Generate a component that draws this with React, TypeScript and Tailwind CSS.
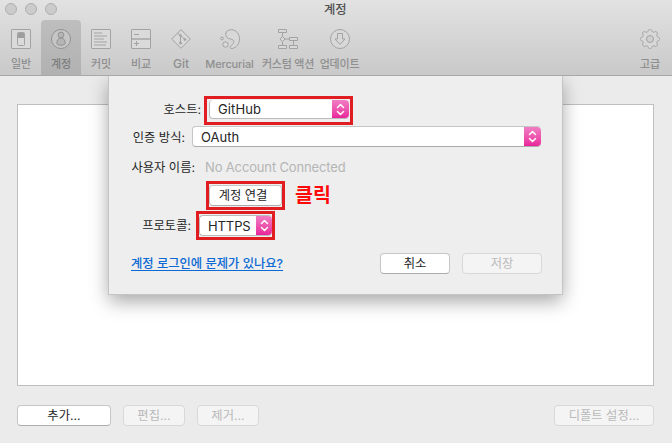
import React from "react";

type ToolProps = { label: string; width: string; active?: boolean; text?: string; children: React.ReactNode };

function Tool({ label, width, active, text = "tracking-normal", children }: ToolProps) {
  return (
    <div
      className={`flex h-[55px] shrink-0 flex-col items-center rounded-t-[4px] pt-[9px] ${width} ${
        active ? "bg-linear-to-b from-[#bebebe] to-[#b1b1b1] text-[#7d7d7d]" : "text-[#8f8f8f]"
      }`}
    >
      <svg
        width="20"
        height="20"
        viewBox="0 0 20 20"
        fill="none"
        stroke={active ? "#929292" : "#a3a3a3"}
        className="shrink-0"
      >
        {children}
      </svg>
      <span className={`mt-[7px] text-[11px] leading-[16px] font-medium whitespace-nowrap ${text}`}>{label}</span>
    </div>
  );
}

function Stepper({ width }: { width: string }) {
  return (
    <span
      className={`flex shrink-0 items-center justify-center self-stretch rounded-r-[4px] bg-linear-to-b from-[#f07cc4] to-[#e9209b] ${width}`}
    >
      <svg width="9" height="13" viewBox="0 0 9 13" fill="none" stroke="#fff" strokeWidth="1.5" strokeLinecap="round" strokeLinejoin="round">
        <path d="M1.5 4.5l3-3 3 3M1.5 8.5l3 3 3-3" />
      </svg>
    </span>
  );
}

function Button({ label, width, disabled }: { label: string; width: string; disabled?: boolean }) {
  return (
    <button
      disabled={disabled}
      className={`flex h-[21px] shrink-0 items-center justify-center rounded-[4px] border pt-[2px] text-[12.3px] leading-none whitespace-nowrap ${width} ${
        disabled
          ? "border-[#d8d8d8] bg-[#f4f4f4] text-[#b9b9b9]"
          : "border-[#c6c6c6] border-b-[#acacac] bg-white text-[#262626]"
      }`}
    >
      {label}
    </button>
  );
}

function Label({ children, width }: { children: React.ReactNode; width: string }) {
  return <span className={`shrink-0 text-right text-[12.3px] whitespace-nowrap text-[#262626] ${width}`}>{children}</span>;
}

const gearPath =
  Array.from({ length: 96 }, (_, i) => {
    const a = (i / 96) * Math.PI * 2;
    const c = Math.cos(8 * a);
    const r = 8.6 + 1.15 * Math.sign(c) * Math.pow(Math.abs(c), 0.6);
    return `${i ? "L" : "M"}${(10 + r * Math.cos(a)).toFixed(2)} ${(10 + r * Math.sin(a)).toFixed(2)}`;
  }).join("") + "z";

function Toolbar() {
  return (
    <header className="relative z-20 h-[76px] border-b border-[#a8a8a8] bg-linear-to-b from-[#e2e2e2] to-[#c9c9c9]">
      <div className="flex h-5 items-start pl-[5px]">
        <div className="flex gap-2 pt-[3px]">
          {[0, 1, 2].map((i) => (
            <i key={i} className="size-3 rounded-full border border-[#b0b0b0] bg-[#cbcbcb]" />
          ))}
        </div>
        <h1 className="ml-[267px] pt-px text-[12.3px] leading-[18px] font-medium text-[#505050]">계정</h1>
      </div>
      <nav className="flex items-start pl-px">
        <Tool label="일반" width="w-10">
          <rect x="0.5" y="0.5" width="19" height="19" rx="0.5" fill="#dadada" />
          <rect x="6.5" y="3.5" width="7" height="13" rx="1" />
          <path d="M7 4h6v5H7z" fill="#9e9e9e" stroke="none" />
        </Tool>
        <Tool label="계정" width="w-10" active>
          <circle cx="10" cy="10" r="9.5" fill="#c6c6c6" />
          <circle cx="10" cy="6" r="2.9" fill="#b5b5b5" />
          <path d="M5.8 14.5C5.8 10.5 7.5 9.3 10 9.3s4.2 1.2 4.2 5.2c0 2.3-8.4 2.3-8.4 0z" fill="#b5b5b5" />
        </Tool>
        <Tool label="커밋" width="w-10">
          <rect x="0.5" y="0.5" width="19" height="19" rx="0.5" fill="#dadada" />
          <path d="M3 4h8M3 7h13M3 10h10M3 13h13M3 16h12" strokeWidth="1.2" />
        </Tool>
        <Tool label="비교" width="w-10">
          <rect x="0.5" y="0.5" width="19" height="19" rx="0.5" fill="#dadada" />
          <path d="M0 10h20" strokeWidth="1.4" />
          <path d="M3 5.5h5M3 14.5h5M5.5 12v5" />
        </Tool>
        <Tool label="Git" width="w-10" text="text-[12px]">
          <path d="M10 .7l9.3 9.3-9.3 9.3L.7 10z" fill="#d8d8d8" strokeLinejoin="round" />
          <path d="M6.8 4.2L14 10.5M9.5 6.5v7.5" />
          <circle cx="9.5" cy="6.5" r=".8" fill="#a3a3a3" />
          <circle cx="9.5" cy="14" r="1" fill="#a3a3a3" />
          <circle cx="14" cy="10.5" r=".9" fill="#a3a3a3" />
        </Tool>
        <Tool label="Mercurial" width="w-[57px]" text="tracking-[-0.15px]">
          <path d="M7.5 1.7C13-1.3 19.5 3 19.5 9.5c0 5.5-3.5 9.4-7.5 10-2 .2-2.3-1.3-.8-2.7 2-1.9 3.6-3.9 2.2-5.5C11.7 9.4 8.9 10.6 7 8.5 5.2 6.5 5.4 3 7.5 1.7z" fill="#d8d8d8" />
          <circle cx="5.5" cy="15.5" r="2.7" fill="#d8d8d8" />
          <circle cx="2" cy="9.5" r="1.4" fill="#d8d8d8" />
        </Tool>
        <Tool label="커스텀 액션" width="w-[60px]" text="text-[10.6px] tracking-[-0.25px]">
          <path d="M4.5 3.5V16.5M4.5 10h7M15.5 11.5v5" />
          <path d="M.5.5h8v3h-8zM.5 16.5h8v3h-8zM11.5 8.5h8v3h-8zM11.5 16.5h8v3h-8zM4.5 7.4L7.1 10l-2.6 2.6L1.9 10z" fill="#d8d8d8" />
        </Tool>
        <Tool label="업데이트" width="w-[43px]" text="text-[10.6px] tracking-[-0.2px]">
          <circle cx="10" cy="10" r="9.5" fill="#d8d8d8" />
          <path d="M7.5 4.5h5v5.5h2.5l-5 5.5-5-5.5h2.5z" />
        </Tool>
        <div className="mr-[2px] ml-auto">
          <Tool label="고급" width="w-10">
            <path d={gearPath} fill="#d8d8d8" strokeLinejoin="round" />
            <circle cx="10" cy="10" r="3.5" fill="#cfcfcf" />
          </Tool>
        </div>
      </nav>
    </header>
  );
}

function AccountSheet() {
  return (
    <section className="absolute top-[76px] left-[109px] z-10 h-[218px] w-[453px] bg-[#eeeeee] pt-5 shadow-[0_0_0_1px_#c4c4c4,0_7px_18px_rgba(0,0,0,0.36)]">
      <div className="flex h-[29px] items-center">
        <Label width="w-[92px]">호스트:</Label>
        <div className="ml-[3px] h-[29px] w-[149px] border-[3px] border-[#e01d20] pl-[2px]">
          <div className="mt-px flex h-[19px] w-[140px] items-center rounded-[4px] border-b border-l border-[#bbb] bg-white pl-[8px]">
            <span className="flex-1 text-[13px] leading-[18px] tracking-[0.1px] text-[#262626]">GitHub</span>
            <Stepper width="w-[17px]" />
          </div>
        </div>
      </div>
      <div className="mt-px flex h-[21px] items-center">
        <Label width="w-[76px] mt-1">인증 방식:</Label>
        <div className="ml-[7px] flex h-[21px] w-[349px] items-center rounded-[4px] border border-r-0 border-[#c6c6c6] border-b-[#aaa] bg-white pl-[8px]">
          <span className="flex-1 text-[13px] leading-[18px] text-[#262626]">OAuth</span>
          <Stepper width="w-[17px]" />
        </div>
      </div>
      <div className="mt-[10px] flex h-5 items-center">
        <Label width="w-[86px] mt-[2px]">사용자 이름:</Label>
        <span className="mt-[2px] ml-[10px] text-[13px] tracking-[-0.15px] whitespace-nowrap text-[#b5b5b5]">No Account Connected</span>
      </div>
      <div className="mt-1 flex h-[29px] items-center pl-[97px]">
        <div className="h-[29px] w-[79px] border-[3px] border-[#e01d20] pt-px">
          <Button label="계정 연결" width="w-[73px] pr-[5px]" />
        </div>
        <strong className="ml-[10px] text-[19.5px] leading-none font-bold whitespace-nowrap text-[#ff0909]">클릭</strong>
      </div>
      <div className="mt-px flex h-[29px] items-center">
        <Label width="w-[82px] mt-[2px]">프로토콜:</Label>
        <div className="ml-[5px] h-[29px] w-[79px] border-[3px] border-[#e01d20] pt-px">
          <div className="flex h-[21px] w-[73px] items-center rounded-[4px] border border-r-0 border-[#bbb] bg-white pl-[8px]">
            <span className="flex-1 text-[13px] leading-[18px] tracking-[-0.1px] text-[#262626]">HTTPS</span>
            <Stepper width="w-[16px]" />
          </div>
        </div>
      </div>
      <div className="mt-[13px] flex h-[21px] items-center pl-[22px]">
        <a className="w-[249px] pt-px text-[12.3px] font-medium whitespace-nowrap text-[#0b6ad4] underline underline-offset-2">계정 로그인에 문제가 있나요?</a>
        <div className="flex gap-3">
          <Button label="취소" width="w-[70px]" />
          <Button label="저장" width="w-20" disabled />
        </div>
      </div>
    </section>
  );
}

export default function App() {
  return (
    <div className="relative h-[443px] w-[672px] overflow-hidden bg-[#ebebeb] font-['Inter','Noto_Sans_CJK_KR',sans-serif]">
      <Toolbar />
      <main className="px-[17px] pt-7">
        <div className="h-[282px] w-[637px] border border-[#bfbfbf] bg-white" />
        <footer className="mt-[19px] flex w-[637px] gap-3">
          <Button label="추가..." width="w-[94px]" />
          <Button label="편집..." width="w-[62px]" disabled />
          <Button label="제거..." width="w-[62px]" disabled />
          <div className="ml-auto">
            <Button label="디폴트 설정..." width="w-[100px]" disabled />
          </div>
        </footer>
      </main>
      <AccountSheet />
    </div>
  );
}
